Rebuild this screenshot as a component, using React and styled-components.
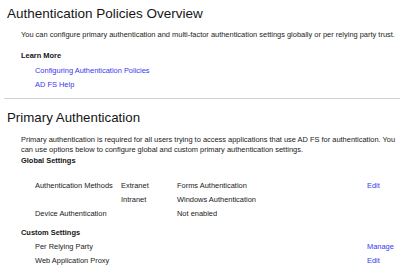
import React from 'react';
import styled, { createGlobalStyle } from 'styled-components';

const GlobalStyle = createGlobalStyle`
    html, body {
        margin: 0;
        padding: 0;
        background: #ffffff;
    }
    body {
        font-family: "Liberation Sans", Arial, sans-serif;
        color: #222222;
    }
`

const Page = styled.div`
    width: 400px;
    height: 275px;
    overflow: hidden;
    display: flex;
    flex-direction: column;
`

const Section = styled.section`
    display: flex;
    flex-direction: column;
    padding-left: 7px;
`

const Title = styled.h1`
    margin: ${props => props.top}px 0 0 0;
    font-size: ${props => props.size}px;
    line-height: 16px;
    font-weight: normal;
    color: #151515;
    white-space: nowrap;
`

const Body = styled.div`
    display: flex;
    flex-direction: column;
    padding-left: 14px;
`

const Text = styled.p`
    margin: ${props => props.top}px 0 0 0;
    font-size: 7.45px;
    line-height: 10px;
    color: #222222;
    white-space: nowrap;
`

const SubHeading = styled.h2`
    margin: ${props => props.top}px 0 0 0;
    font-size: 7.45px;
    line-height: ${props => props.lh}px;
    font-weight: bold;
    color: #151515;
`

const List = styled.div`
    display: flex;
    flex-direction: column;
    margin-top: ${props => props.top}px;
    padding-left: 14px;
`

const Link = styled.a`
    font-size: 7.45px;
    line-height: 14px;
    color: #3838ee;
    text-decoration: none;
    cursor: pointer;
    white-space: nowrap;
`

const Divider = styled.hr`
    margin: 6px 0 0 4px;
    border: 0;
    height: 1px;
    background: #d3d3d3;
`

const SettingsGrid = styled.div`
    display: grid;
    grid-template-columns: 86px 56px 190px auto;
    grid-auto-rows: 14px;
    margin-top: ${props => props.top}px;
    padding-left: 14px;
    font-size: 7.45px;
    line-height: 14px;
    white-space: nowrap;
`

const Cell = styled.span`
    grid-column: ${props => props.span || 'auto'};
    color: #222222;
`

const Action = styled(Link)`
    grid-column: 4;
`

const settings = [
    { label: 'Authentication Methods', scope: 'Extranet', value: 'Forms Authentication', action: 'Edit' },
    { label: '', scope: 'Intranet', value: 'Windows Authentication' },
    { label: 'Device Authentication', scope: '', value: 'Not enabled' },
]

const custom = [
    { label: 'Per Relying Party', action: 'Manage' },
    { label: 'Web Application Proxy', action: 'Edit' },
]

export default function App() {
    return (
        <Page>
            <GlobalStyle />
            <Section>
                <Title top={5.6} size={13.5}>Authentication Policies Overview</Title>
                <Body>
                    <Text top={8.3}>
                        You can configure primary authentication and multi-factor authentication settings globally or per relying party trust.
                    </Text>
                    <SubHeading top={9.5} lh={14}>Learn More</SubHeading>
                    <List top={0.5}>
                        <Link>Configuring Authentication Policies</Link>
                        <Link>AD FS Help</Link>
                    </List>
                </Body>
            </Section>
            <Divider />
            <Section>
                <Title top={10.9} size={13.3}>Primary Authentication</Title>
                <Body>
                    <Text top={9.5}>
                        Primary authentication is required for all users trying to access applications that use AD FS for authentication. You
                        <br />
                        can use options below to configure global and custom primary authentication settings.
                    </Text>
                    <SubHeading top={0.7} lh={10}>Global Settings</SubHeading>
                    <SettingsGrid top={12.8}>
                        {settings.map((row, i) => (
                            <React.Fragment key={i}>
                                <Cell>{row.label}</Cell>
                                <Cell>{row.scope}</Cell>
                                <Cell>{row.value}</Cell>
                                {row.action ? <Action>{row.action}</Action> : <Cell />}
                            </React.Fragment>
                        ))}
                    </SettingsGrid>
                    <SubHeading top={5.5} lh={14}>Custom Settings</SubHeading>
                    <SettingsGrid top={0}>
                        {custom.map((row, i) => (
                            <React.Fragment key={i}>
                                <Cell span="1 / 4">{row.label}</Cell>
                                <Action>{row.action}</Action>
                            </React.Fragment>
                        ))}
                    </SettingsGrid>
                </Body>
            </Section>
        </Page>
    )
}
